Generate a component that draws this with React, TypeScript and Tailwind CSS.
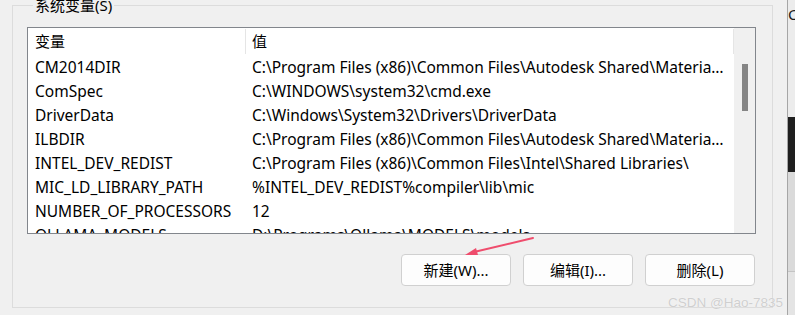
import React from "react";

const rows: [string, string][] = [
  ["CM2014DIR", "C:\\Program Files (x86)\\Common Files\\Autodesk Shared\\Materials\\"],
  ["ComSpec", "C:\\WINDOWS\\system32\\cmd.exe"],
  ["DriverData", "C:\\Windows\\System32\\Drivers\\DriverData"],
  ["ILBDIR", "C:\\Program Files (x86)\\Common Files\\Autodesk Shared\\Materials\\"],
  ["INTEL_DEV_REDIST", "C:\\Program Files (x86)\\Common Files\\Intel\\Shared Libraries\\"],
  ["MIC_LD_LIBRARY_PATH", "%INTEL_DEV_REDIST%compiler\\lib\\mic"],
  ["NUMBER_OF_PROCESSORS", "12"],
  ["OLLAMA_MODELS", "D:\\Programs\\Ollama\\MODELS\\models"],
];

const font = "font-['Noto_Sans','Noto_Sans_CJK_SC',sans-serif]";

function Button({ label }: { label: string }) {
  return (
    <div className="w-[110px] h-[32px] rounded-[4px] border border-[#d0d0d0] bg-[#fdfdfd] flex items-center justify-center text-[15px] text-black">
      {label}
    </div>
  );
}

export default function App() {
  return (
    <div className={`relative w-[795px] h-[315px] overflow-hidden bg-[#f0f0f0] flex ${font}`}>
      <div className="w-[787px] shrink-0 pl-[12px] pr-[15px]">
        <fieldset className="-mt-[5px] border border-[#dcdcdc] pl-[14px] pr-[16px] pb-[21px]">
          <legend className="ml-[6px] px-[2px] text-[15px] leading-[20px] text-black">系统变量(S)</legend>
          <div className="mt-[12px] w-[729px] h-[207px] border border-[#82868c] bg-white flex overflow-hidden">
            <div className="w-[706px] shrink-0 flex flex-col text-[15.5px] text-black">
              <div className="h-[27px] shrink-0 flex">
                <div className="w-[217px] shrink-0 pl-[7px] flex items-center text-[15px]">变量</div>
                <div className="w-px my-[1px] bg-[#e5e5e5]" />
                <div className="flex-1 pl-[6px] flex items-center text-[15px]">值</div>
                <div className="w-px my-[1px] bg-[#e5e5e5]" />
              </div>
              {rows.map(([k, v]) => (
                <div key={k} className="h-[24px] shrink-0 flex items-center pt-[2px]">
                  <div className="w-[218px] shrink-0 pl-[7px] whitespace-nowrap">{k}</div>
                  <div className="w-[479px] shrink-0 pl-[6px] whitespace-nowrap overflow-hidden text-ellipsis">{v}</div>
                </div>
              ))}
            </div>
            <div className="flex-1 bg-[#f0f0f0] pt-[36px] pl-[8px]">
              <div className="w-[6px] h-[47px] bg-[#858585]" />
            </div>
          </div>
          <div className="mt-[20px] flex justify-end gap-[12px] pr-[1px]">
            <Button label="新建(W)..." />
            <Button label="编辑(I)..." />
            <Button label="删除(L)" />
          </div>
        </fieldset>
      </div>
      <div className="w-px shrink-0 bg-[#a6a6a6]" />
      <div className="flex-1 flex flex-col overflow-hidden">
        <div className="h-[117px] bg-[#ececec] text-[15px] leading-[28px] text-[#1a1a1a] whitespace-nowrap">C</div>
        <div className="h-[55px] bg-[#1f1f1f]" />
        <div className="h-[100px] bg-[#dadada] border-b border-[#c4c4c4]" />
        <div className="flex-1 bg-[#e4e4e4]" />
      </div>

      <svg className="absolute left-0 top-0 pointer-events-none" width="795" height="315">
        <line x1="533" y1="238" x2="474" y2="252" stroke="#ef4d6d" strokeWidth="2" strokeLinecap="round" />
        <polygon points="465,255 476,248 478,255" fill="#ef4d6d" />
      </svg>
      <div className="absolute left-[668px] top-[295px] whitespace-nowrap text-[13.5px] leading-[16px] text-[#cfcfcf] font-['Liberation_Sans',sans-serif] pointer-events-none [text-shadow:0_0_1px_#ffffff]">
        CSDN @Hao-7835
      </div>
    </div>
  );
}
